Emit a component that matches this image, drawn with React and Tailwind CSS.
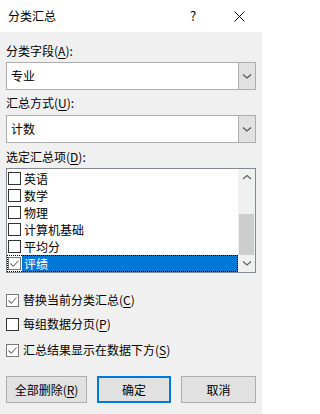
const font = { fontFamily: '"Noto Sans CJK SC", "Microsoft YaHei", sans-serif' };

// 带下划线的快捷键字母
function Label({ text, hotkey }) {
  return (
    <div className="h-[16px] text-[12px] leading-[16px] text-black">
      {text}(<span className="underline underline-offset-2">{hotkey}</span>):
    </div>
  );
}

function Chevron({ dir = "down", className = "" }) {
  const d = dir === "down" ? "M1 1.5 L5 5 L9 1.5" : "M1 5 L5 1.5 L9 5";
  return (
    <svg width="10" height="7" viewBox="0 0 10 7" className={className}>
      <path d={d} fill="none" stroke="currentColor" strokeWidth="1.2" />
    </svg>
  );
}

function Combo({ value, className = "" }) {
  return (
    <div className={`flex h-[28px] border border-[#adadad] bg-white ${className}`}>
      <div className="flex flex-1 items-center pl-[4px] text-[12px] text-black">{value}</div>
      <div className="flex w-[17px] items-center justify-center border-l border-[#adadad] bg-[#e1e1e1] text-[#555]">
        <Chevron />
      </div>
    </div>
  );
}

function Box({ checked, dark }) {
  return (
    <div
      className={`flex h-[13px] w-[13px] flex-none items-center justify-center border bg-white ${
        checked && !dark ? "border-[#7a7a7a]" : "border-[#333]"
      }`}
    >
      {checked && (
        <svg width="11" height="11" viewBox="0 0 11 11">
          <path d="M1.5 5.5 L4.3 8.3 L9.5 2.5" fill="none" stroke="#707070" strokeWidth="1.1" />
        </svg>
      )}
    </div>
  );
}

const ITEMS = [
  { label: "英语", checked: false },
  { label: "数学", checked: false },
  { label: "物理", checked: false },
  { label: "计算机基础", checked: false },
  { label: "平均分", checked: false },
  { label: "评绩", checked: true, selected: true },
];

function ListRow({ item }) {
  return (
    <div
      className={`flex h-[17px] items-center ${
        item.selected ? "outline outline-1 outline-dotted outline-[#000] -outline-offset-1" : ""
      }`}
    >
      <div className="ml-[1px]">
        <Box checked={item.checked} />
      </div>
      <div
        className={`ml-[1px] flex h-[17px] flex-1 items-center pl-[2px] text-[12px] ${
          item.selected ? "bg-[#0078d7] text-white" : "text-black"
        }`}
      >
        {item.label}
      </div>
    </div>
  );
}

function Option({ text, hotkey, checked, className = "" }) {
  return (
    <div className={`flex h-[16px] items-center gap-[4px] text-[12px] text-black ${className}`}>
      <Box checked={checked} />
      <span>
        {text}(<span className="underline underline-offset-2">{hotkey}</span>)
      </span>
    </div>
  );
}

function Button({ children, primary, className = "" }) {
  return (
    <div
      className={`flex h-[27px] items-center justify-center bg-[#e1e1e1] text-[12px] text-black ${
        primary ? "border-2 border-[#0078d7]" : "border border-[#adadad]"
      } ${className}`}
    >
      {children}
    </div>
  );
}

export default function App() {
  return (
    <div className="h-[414px] w-[262px] overflow-hidden bg-[#f0f0f0]" style={font}>
      {/* 标题栏 */}
      <div className="flex h-[32px] items-center bg-white">
        <div className="flex-1 pl-[8px] text-[12px] text-black">分类汇总</div>
        <div className="w-[46px] text-center text-[13px] text-black">?</div>
        <div className="flex w-[46px] items-center justify-center">
          <svg width="11" height="11" viewBox="0 0 11 11">
            <path d="M0.5 0.5 L10.5 10.5 M10.5 0.5 L0.5 10.5" stroke="#000" strokeWidth="1" />
          </svg>
        </div>
      </div>

      <div className="flex flex-col px-[6px]">
        <div className="mt-[11px]">
          <Label text="分类字段" hotkey="A" />
        </div>
        <Combo value="专业" className="mt-[3px]" />

        <div className="mt-[5px]">
          <Label text="汇总方式" hotkey="U" />
        </div>
        <Combo value="计数" className="mt-[4px]" />

        <div className="mt-[6px]">
          <Label text="选定汇总项" hotkey="D" />
        </div>
        <div className="mt-[3px] flex h-[105px] border border-[#828790] bg-white">
          <div className="flex flex-1 flex-col pt-[1px]">
            {ITEMS.map((item) => (
              <ListRow key={item.label} item={item} />
            ))}
          </div>
          <div className="flex w-[17px] flex-col bg-[#f0f0f0] text-[#606060]">
            <div className="flex h-[17px] items-center justify-center">
              <Chevron dir="up" />
            </div>
            <div className="mt-[28px] h-[41px] mx-[1px] bg-[#cdcdcd]" />
            <div className="flex h-[17px] items-center justify-center">
              <Chevron />
            </div>
          </div>
        </div>

        <Option text="替换当前分类汇总" hotkey="C" checked className="mt-[19px]" />
        <Option text="每组数据分页" hotkey="P" className="mt-[8px]" />
        <Option text="汇总结果显示在数据下方" hotkey="S" checked className="mt-[10px]" />

        <div className="mt-[18px] flex gap-[10px]">
          <Button className="w-[81px]">
            全部删除(<span className="underline underline-offset-2">R</span>)
          </Button>
          <Button primary className="w-[74px]">
            确定
          </Button>
          <Button className="w-[75px]">取消</Button>
        </div>
      </div>
    </div>
  );
}
